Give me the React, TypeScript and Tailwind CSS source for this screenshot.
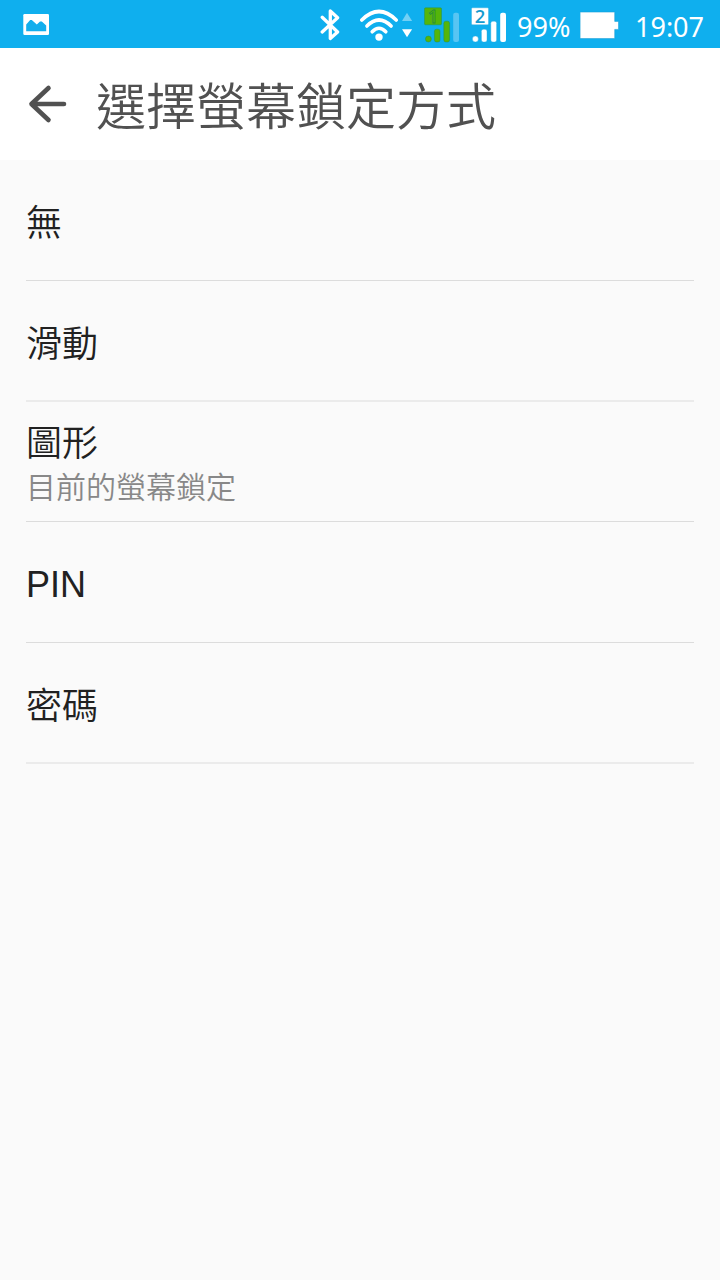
interface LockOption {
  title: string
  summary?: string
  row: string
}

const THIN = 'border-b border-[#dcdcdc]'
const THICK = 'border-b-2 border-[#ebebeb]'

const options: LockOption[] = [
  { title: '無', row: `h-[121px] ${THIN}` },
  { title: '滑動', row: `h-[121px] ${THICK}` },
  { title: '圖形', summary: '目前的螢幕鎖定', row: `h-[120px] ${THIN}` },
  { title: 'PIN', row: `h-[121px] pb-[3px] ${THIN}` },
  { title: '密碼', row: `h-[121px] ${THICK}` },
]

function PictureIcon() {
  return (
    <svg className="w-[27px] h-[48px]" viewBox="0 0 27 48">
      <rect x="0.3" y="14" width="25.7" height="21" rx="1.2" fill="#fff" />
      <path d="M3.2 31.2v-6.8L7.2 20h1.6l5 4.6 3.2-3.2h1.8l4.4 4v5.8z" fill="#12aeed" />
    </svg>
  )
}

function BluetoothIcon() {
  return (
    <svg className="w-[22px] h-[48px]" viewBox="0 0 22 48">
      <path
        d="M2.2 17.3 17.6 32 10.3 38.5V11L17.6 17.8 2.2 32"
        fill="none"
        stroke="#fff"
        strokeWidth="3.3"
        strokeLinecap="round"
        strokeLinejoin="round"
      />
    </svg>
  )
}

function WifiIcon() {
  return (
    <svg className="w-[53px] h-[48px]" viewBox="0 0 53 48">
      <g fill="none" stroke="#fff" strokeWidth="3.6" strokeLinecap="round">
        <path d="M1.8 20q17.2-17 34.4 0" />
        <path d="M6.9 26q12.1-12 24.2 0" />
        <path d="M12.2 31.8q6.8-7 13.6 0" />
      </g>
      <circle cx="19" cy="37.1" r="3.7" fill="#fff" />
      <path d="M47 12.7 52.1 21H42z" fill="#72d0f5" />
      <path d="M42 29.2h10.1L47 37.3z" fill="#fff" />
    </svg>
  )
}

function SignalIcon({ sim, color, outline, last }: { sim: string; color: string; outline: string; last: string }) {
  return (
    <svg className="w-[37px] h-[48px]" viewBox="0 0 37 48">
      <g fill={color} stroke={outline} strokeWidth="0.4">
        <rect x="0.5" y="7.8" width="17" height="17" rx="1" />
        <circle cx="4.4" cy="39" r="3" />
        <rect x="10.4" y="29.2" width="5.6" height="12.8" rx="2" />
        <rect x="19.8" y="21.2" width="5.8" height="20.8" rx="2" />
        <rect x="29.2" y="12.8" width="5.8" height="29.2" rx="2" fill={last} stroke="none" />
      </g>
      <text
        x="9"
        y="22.9"
        textAnchor="middle"
        fontFamily="'Open Sans', 'Noto Sans', sans-serif"
        fontSize="18.5"
        fontWeight="600"
        fill={sim === '1' ? color : '#159bcf'}
        stroke={outline}
        strokeWidth={sim === '1' ? 0.8 : 0}
      >
        {sim}
      </text>
    </svg>
  )
}

function BatteryIcon() {
  return (
    <svg className="w-[40px] h-[48px]" viewBox="0 0 40 48">
      <path
        d="M0.1 12.1h34.6v9.3h3.8v8h-3.8v9.1H0.1z"
        fill="#fff"
        stroke="#1198d2"
        strokeWidth="0.5"
      />
    </svg>
  )
}

function StatusBar() {
  return (
    <div className="flex h-12 items-center bg-[#0fafee] pl-[23px] text-white font-['Noto_Sans',sans-serif] text-[27px] leading-[48px]">
      <PictureIcon />
      <div className="ml-[270px]">
        <BluetoothIcon />
      </div>
      <div className="ml-[18px]">
        <WifiIcon />
      </div>
      <div className="ml-[11px]">
        <SignalIcon sim="1" color="#55b50b" outline="#268c3c" last="#58c5f3" />
      </div>
      <div className="ml-[10px]">
        <SignalIcon sim="2" color="#fff" outline="#28a8dc" last="#fff" />
      </div>
      <span className="ml-[9px] w-[54px] whitespace-nowrap pt-[5px]">99%</span>
      <div className="ml-[9px]">
        <BatteryIcon />
      </div>
      <span className="ml-[15px] whitespace-nowrap pt-[5px]">19:07</span>
    </div>
  )
}

function Header() {
  return (
    <header className="flex h-28 items-center bg-white pl-7 text-[#515151]">
      <svg className="h-10 w-10 shrink-0" viewBox="0 0 40 40" fill="none" stroke="currentColor" strokeWidth="4.6" strokeLinecap="round" strokeLinejoin="round">
        <path d="M36 20H3.5M20.5 4 3.5 20l17 16" />
      </svg>
      <h1 className="ml-7 whitespace-nowrap pt-2 text-[50px] font-[350] leading-[60px]">選擇螢幕鎖定方式</h1>
    </header>
  )
}

export default function App() {
  return (
    <div className="h-[1280px] w-[720px] overflow-hidden bg-[#fafafa] font-['Liberation_Sans','Noto_Sans_CJK_TC',sans-serif]">
      <StatusBar />
      <Header />
      <main className="px-[26px]">
        {options.map(option => (
          <div key={option.title} className={`flex flex-col justify-center pt-2 ${option.row}`}>
            <div className="whitespace-nowrap text-[36px] font-[350] leading-[44px] text-[#212121]">{option.title}</div>
            {option.summary && (
              <div className="whitespace-nowrap text-[30px] font-[350] leading-[44px] text-[#888888]">{option.summary}</div>
            )}
          </div>
        ))}
      </main>
    </div>
  )
}
